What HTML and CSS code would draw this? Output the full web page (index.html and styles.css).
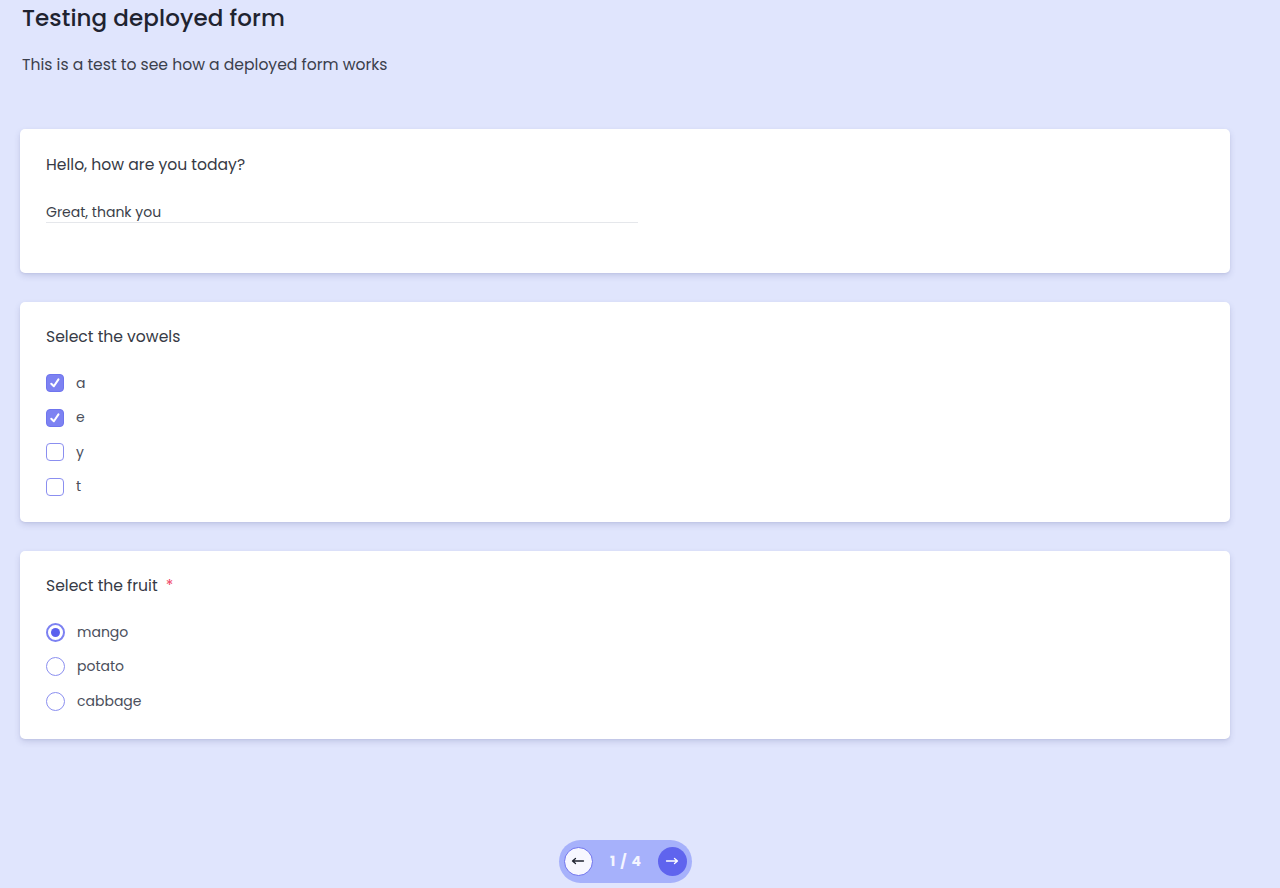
FILE: index.html
```html
<!DOCTYPE html>
<html lang="en">
<head>
<meta charset="utf-8">
<title>Testing deployed form</title>
<link rel="stylesheet" href="styles.css">
</head>
<body>
<main class="page">
  <header class="form-head">
    <h1 class="form-title">Testing deployed form</h1>
    <p class="form-desc">This is a test to see how a deployed form works</p>
  </header>

  <section class="cards">
    <div class="card">
      <p class="question">Hello, how are you today?</p>
      <div class="text-input">Great, thank you</div>
    </div>

    <div class="card">
      <p class="question">Select the vowels</p>
      <ul class="options">
        <li class="option"><span class="checkbox checked"><svg viewBox="0 0 18 18" width="18" height="18"><path d="M4.8 9.8 L7.7 12.6 L12.9 4.9" fill="none" stroke="#fff" stroke-width="2.3" stroke-linecap="round" stroke-linejoin="round"/></svg></span><span class="opt-label">a</span></li>
        <li class="option"><span class="checkbox checked"><svg viewBox="0 0 18 18" width="18" height="18"><path d="M4.8 9.8 L7.7 12.6 L12.9 4.9" fill="none" stroke="#fff" stroke-width="2.3" stroke-linecap="round" stroke-linejoin="round"/></svg></span><span class="opt-label">e</span></li>
        <li class="option"><span class="checkbox"></span><span class="opt-label">y</span></li>
        <li class="option"><span class="checkbox"></span><span class="opt-label">t</span></li>
      </ul>
    </div>

    <div class="card card-radio">
      <p class="question">Select the fruit <span class="required">*</span></p>
      <ul class="options">
        <li class="option"><span class="radio checked"></span><span class="opt-label">mango</span></li>
        <li class="option"><span class="radio"></span><span class="opt-label">potato</span></li>
        <li class="option"><span class="radio"></span><span class="opt-label">cabbage</span></li>
      </ul>
    </div>
  </section>

  <nav class="pager">
    <div class="pager-pill">
      <button class="pg-btn pg-prev" type="button"><svg viewBox="0 0 16 16" width="16" height="16"><path d="M13.5 8 H2.5 M5.5 5.5 L2.5 8 L5.5 10.5" fill="none" stroke="#1f2330" stroke-width="1.3" stroke-linecap="round" stroke-linejoin="round"/></svg></button>
      <span class="pg-count">1 / 4</span>
      <button class="pg-btn pg-next" type="button"><svg viewBox="0 0 16 16" width="16" height="16"><path d="M2.5 8 H13.5 M10.5 5.5 L13.5 8 L10.5 10.5" fill="none" stroke="#fff" stroke-width="1.3" stroke-linecap="round" stroke-linejoin="round"/></svg></button>
    </div>
  </nav>
</main>
</body>
</html>
```

FILE: styles.css
```css
* { box-sizing: border-box; }
html, body {
  margin: 0;
  padding: 0;
  background: #e0e5fd;
}
body {
  font-family: "Poppins", "Lato", "Noto Sans", sans-serif;
  color: #374151;
  height: 888px;
  overflow: hidden;
}
.page {
  padding: 0 50px 0 20px;
}
.form-head {
  padding-left: 2px;
}
.form-title {
  margin: 0;
  padding-top: 3px;
  font-size: 23px;
  line-height: 30px;
  font-weight: 500;
  color: #1f2330;
  letter-spacing: 0.1px;
}
.form-desc {
  margin: 21px 0 0;
  font-size: 15.6px;
  line-height: 22px;
  color: #3b3f4c;
}
.cards {
  margin-top: 53px;
  display: flex;
  flex-direction: column;
  gap: 29px;
}
.card {
  background: #ffffff;
  border-radius: 5px;
  box-shadow: 0 3px 6px rgba(60, 70, 130, 0.16), 0 1px 2px rgba(60, 70, 130, 0.08);
  padding: 24px 26px 18px;
}
.question {
  margin: 0;
  font-size: 15.6px;
  line-height: 22px;
  color: #363a45;
}
.card:first-child .question {
  padding-top: 1px;
}
.required {
  color: #ef4466;
  margin-left: 4px;
}
.text-input {
  margin-top: 26px;
  width: 592px;
  font-size: 14px;
  line-height: 20px;
  color: #3b3f4a;
  padding-bottom: 0;
  border-bottom: 1px solid #e5e7eb;
  margin-bottom: 32px;
}
.options {
  list-style: none;
  margin: 18px 0 0;
  padding: 0;
}
.option {
  display: flex;
  align-items: center;
  height: 34.5px;
  gap: 12px;
}
.opt-label {
  font-size: 14px;
  color: #4b4f5c;
}
.checkbox {
  width: 18px;
  height: 18px;
  border: 1.5px solid #8b8ff0;
  border-radius: 4px;
  background: #fff;
  display: inline-flex;
  align-items: center;
  justify-content: center;
  flex: none;
}
.checkbox.checked {
  background: #7d82f2;
  border-color: #6f75ee;
}
.checkbox svg { display: block; }
.radio {
  width: 19px;
  height: 19px;
  border: 1.5px solid #8b8ff0;
  border-radius: 50%;
  background: #fff;
  flex: none;
  display: inline-flex;
  align-items: center;
  justify-content: center;
}
.radio.checked {
  border: 2px solid #7c81f2;
}
.radio.checked::after {
  content: "";
  width: 9px;
  height: 9px;
  border-radius: 50%;
  background: #5b60ee;
}
.card-radio {
  padding-bottom: 20px;
}
.pager {
  margin-top: 101px;
  display: flex;
  justify-content: center;
}
.pager-pill {
  display: flex;
  align-items: center;
  width: 133px;
  height: 43px;
  padding: 0 5px;
  border-radius: 22px;
  background: #a6b1fb;
  justify-content: space-between;
}
.pg-btn {
  width: 29px;
  height: 29px;
  border-radius: 50%;
  padding: 0;
  display: inline-flex;
  align-items: center;
  justify-content: center;
  cursor: pointer;
}
.pg-prev {
  background: #f7f7ff;
  border: 1.5px solid #6d72ee;
}
.pg-next {
  background: #5f64ee;
  border: none;
}
.pg-count {
  font-family: "Poppins", "Lato", sans-serif;
  font-weight: 700;
  font-size: 14px;
  color: #f4f5ff;
  letter-spacing: 1px;
  padding-left: 2px;
}
```
